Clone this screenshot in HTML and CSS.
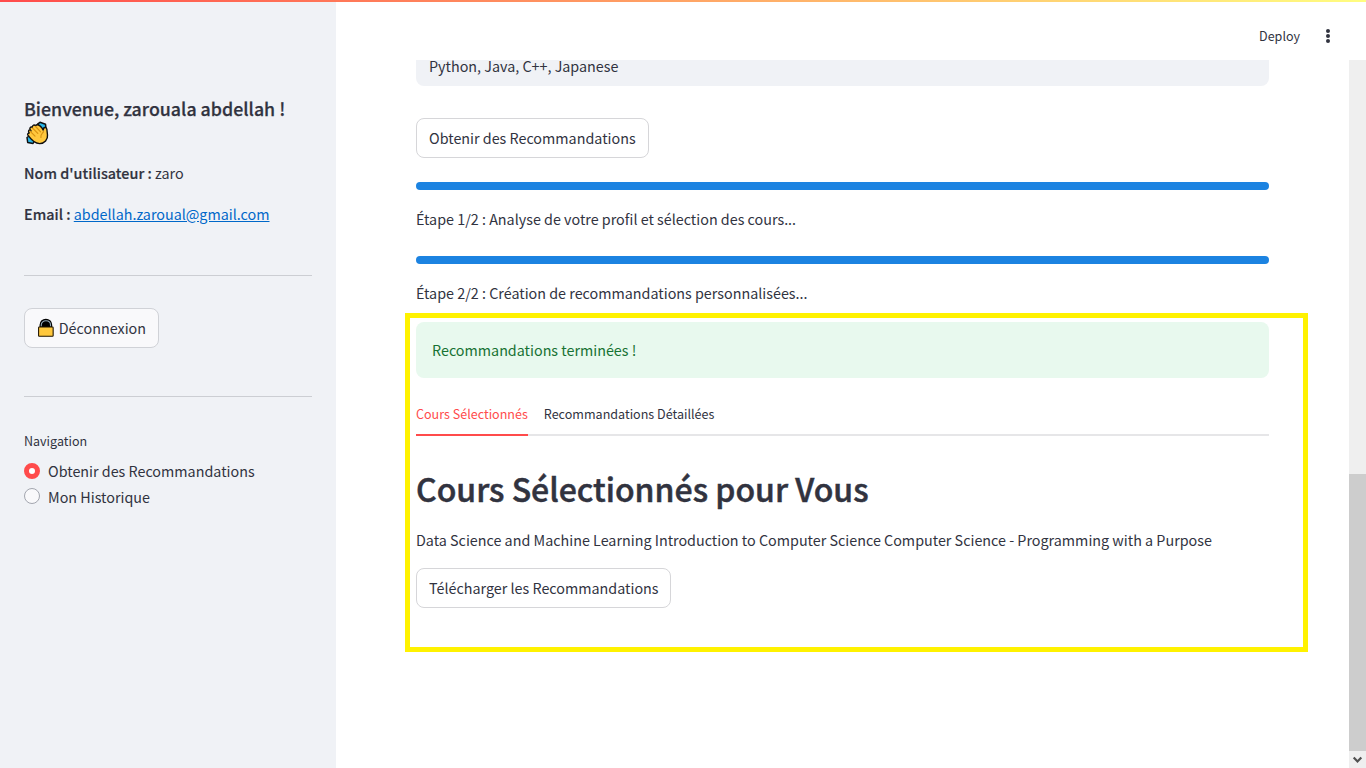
FILE: index.html
```html
<!DOCTYPE html>
<html lang="fr">
<head>
<meta charset="utf-8">
<title>Recommandations</title>
<link rel="stylesheet" href="styles.css">
</head>
<body>
<div class="app">
  <aside class="sidebar">
    <h3 class="welcome"><span>Bienvenue, zarouala abdellah !</span>
      <svg class="wave" viewBox="0 0 24 24" width="24" height="24">
        <path d="M12.500 3.200 15 1.300 20.500 3.200 21 7.500 17 8zM5.500 14 2 16.500 2.700 21.500 8 22.500 10 19z" fill="#29b6e8" stroke="#101010" stroke-width="1.500" stroke-linejoin="round"/>
        <path d="M14.600 22.600C10 22.600 5 17.200 2.900 14.200 2.100 12.800 3.400 11.700 4.500 12.500 2.500 10.200 3.900 8.700 5.400 9.200 4 7.300 5.600 5.400 7.200 6.200 7.600 3.800 9.300 3.500 10.600 4.700 12.500 1.900 16.900 5.700 18.400 9.500 17.700 6.200 21.300 5.200 21.900 8.500L22.500 14C23 18.500 19.500 22.600 14.600 22.600Z" fill="#ffc83d" stroke="#101010" stroke-width="1.400"/>
        <path d="m5 10.200 5 5M7.600 7.100l5.200 5.300M10.600 5.500l5 5.300M18.500 10.500c-.5 2.200-3.300 2.300-2.600 6" fill="none" stroke="#d79212" stroke-width="1.200" stroke-linecap="round"/>
      </svg>
    </h3>
    <p class="info"><b>Nom d'utilisateur :</b> zaro</p>
    <p class="info email"><b>Email :</b> <a href="#">abdellah.zaroual@gmail.com</a></p>
    <hr class="rule">
    <button class="btn logout">
      <svg width="16" height="20" viewBox="0 0 16 20">
        <path d="M2.300 9V7C2.300-.6 13.700-.6 13.700 7V9Z" fill="#000" stroke="#000" stroke-width="1.500"/>
        <path d="M3.300 8.500V7C3.300 1.200 12.700 1.200 12.700 7V8.500" fill="none" stroke="#93a9b8" stroke-width="1.100"/>
        <rect x=".6" y="9" width="14.800" height="9.400" rx=".7" fill="#ffc83d" stroke="#201400" stroke-width="1.100"/>
      </svg><span>Déconnexion</span>
    </button>
    <hr class="rule second">
    <div class="nav-label">Navigation</div>
    <div class="option"><i class="radio on"></i><span>Obtenir des Recommandations</span></div>
    <div class="option"><i class="radio"></i><span>Mon Historique</span></div>
  </aside>
  <div class="view">
    <header class="header"><span class="deploy">Deploy</span>
      <svg width="6" height="16" viewBox="0 0 6 16" fill="#31333f"><circle cx="3" cy="3" r="2"/><circle cx="3" cy="8" r="2"/><circle cx="3" cy="13" r="2"/></svg>
    </header>
    <div class="scroller">
      <main class="main">
        <div class="field"><span>Python, Java, C++, Japanese</span></div>
        <button class="btn get"><span>Obtenir des Recommandations</span></button>
        <div class="progress"></div>
        <p class="step"><span>Étape 1/2 : Analyse de votre profil et sélection des cours...</span></p>
        <div class="progress"></div>
        <p class="step"><span>Étape 2/2 : Création de recommandations personnalisées...</span></p>
        <section class="result">
          <div class="alert"><span>Recommandations terminées !</span></div>
          <div class="tabs"><div class="tab active">Cours Sélectionnés</div><div class="tab">Recommandations Détaillées</div></div>
          <h1 class="title"><span>Cours Sélectionnés pour Vous</span></h1>
          <p class="courses"><span>Data Science and Machine Learning Introduction to Computer Science Computer Science - Programming with a Purpose</span></p>
          <button class="btn download"><span>Télécharger les Recommandations</span></button>
        </section>
      </main>
      <div class="scrollbar"><div class="thumb"></div>
        <div class="down"><svg width="17" height="17" viewBox="0 0 17 17"><path d="m4.700 6.500 3.800 4 3.800-4" fill="none" stroke="#505050" stroke-width="2.200"/></svg></div>
      </div>
    </div>
  </div>
</div>
<div class="decoration"></div>
</body>
</html>
```

FILE: styles.css
```css
* { box-sizing: border-box; }
body { margin: 0; background: #fff; color: #31333f; overflow: hidden;
  font-family: "Noto Sans CJK SC", "Noto Sans", sans-serif; font-size: 14.33px; line-height: 24px; }
h1, h3, p { margin: 0; }
.app { display: flex; width: 1366px; height: 768px; }
.decoration { position: absolute; top: 0; left: 0; right: 0; height: 2px; background: linear-gradient(90deg, #ff4b4b, #fffd80); }
.sidebar { width: 336px; background: #f0f2f6; padding: 96px 24px 0; }
.welcome { font-size: 17.8px; font-weight: 500; line-height: 24px; height: 48px; white-space: nowrap; -webkit-text-stroke: .25px #31333f; }
.welcome span { display: block; }
.wave { display: block; margin: 1px 0 0 1px; }
.welcome .wave { -webkit-text-stroke: 0; }
.info { margin-top: 17px; height: 24px; white-space: nowrap; }
.info b { font-weight: 500; letter-spacing: .04px; -webkit-text-stroke: .2px #31333f; }
.info a { color: #0068c9; text-decoration: underline; }
.rule { border: 0; height: 1px; background: #ccced3; margin: 49px 0 32px; }
.rule.second { margin: 48px 0 32px; }
.btn { display: flex; align-items: center; height: 40px; padding: 0 12px; border: 1px solid #d6d6d9; border-radius: 8px;
  background: #fff; color: inherit; font: inherit; white-space: nowrap; }
.logout { width: 135px; background: #f9f9fb; border-color: #d0d2d7; gap: 5px; padding-left: 13px; }
.nav-label { font-size: 12.53px; line-height: 24px; margin-bottom: 6px; }
.option { display: flex; align-items: center; gap: 8px; height: 24px; margin-bottom: 2px; }
.radio { width: 16px; height: 16px; border-radius: 50%; border: 1px solid #a3a6af; background: #f9f9fb; margin-top: -2px; }
.radio.on { border: 5px solid #ff4b4b; background: #fff; margin-top: -1px; }
.view { width: 1030px; display: flex; flex-direction: column; }
.header { height: 60px; display: flex; justify-content: flex-end; align-items: center; gap: 25px; padding: 12px 35px 0 0; font-size: 12.53px; }
.scroller { height: 708px; display: flex; justify-content: space-between; }
.main { padding-left: 69px; width: 972px; }
.field { margin-left: 11px; width: 853px; height: 26px; background: #f0f2f6; border-radius: 0 0 8px 8px; padding: 0 13px; line-height: 12px; }
.get { width: 233px; margin: 32px 0 24px 11px; }
.progress { height: 8px; width: 853px; margin-left: 11px; border-radius: 4px; background: #1c83e1; }
.step { height: 24px; margin: 17px 0 25px 11px; }
.step + .result { margin-top: -17px; }
.result { width: 903px; height: 339px; border: 5px solid #fff200; padding: 4px 34px 0 6px; }
.alert { height: 56px; border-radius: 8px; background: #e8f9ee; color: #177233; padding: 16px; }
.tabs { display: flex; gap: 16px; height: 40px; margin-top: 18px; border-bottom: 2px solid #e6e6e8; font-size: 12.55px; }
.tab { height: 40px; line-height: 35px; white-space: nowrap; }
.tab.active { color: #ff4b4b; border-bottom: 2px solid #ff4b4b; }
.title { font-size: 32px; font-weight: 500; line-height: 48px; margin-top: 28px; white-space: nowrap; -webkit-text-stroke: .5px #31333f; }
.courses { margin-top: 16px; margin-bottom: 16px; white-space: nowrap; }
.download { width: 255px; }
.scrollbar { width: 17px; background: #efefef; display: flex; flex-direction: column; justify-content: flex-end; }
.thumb { height: 277px; background: #cdcdcd; }
.down { width: 17px; height: 17px; display: flex; }
```
